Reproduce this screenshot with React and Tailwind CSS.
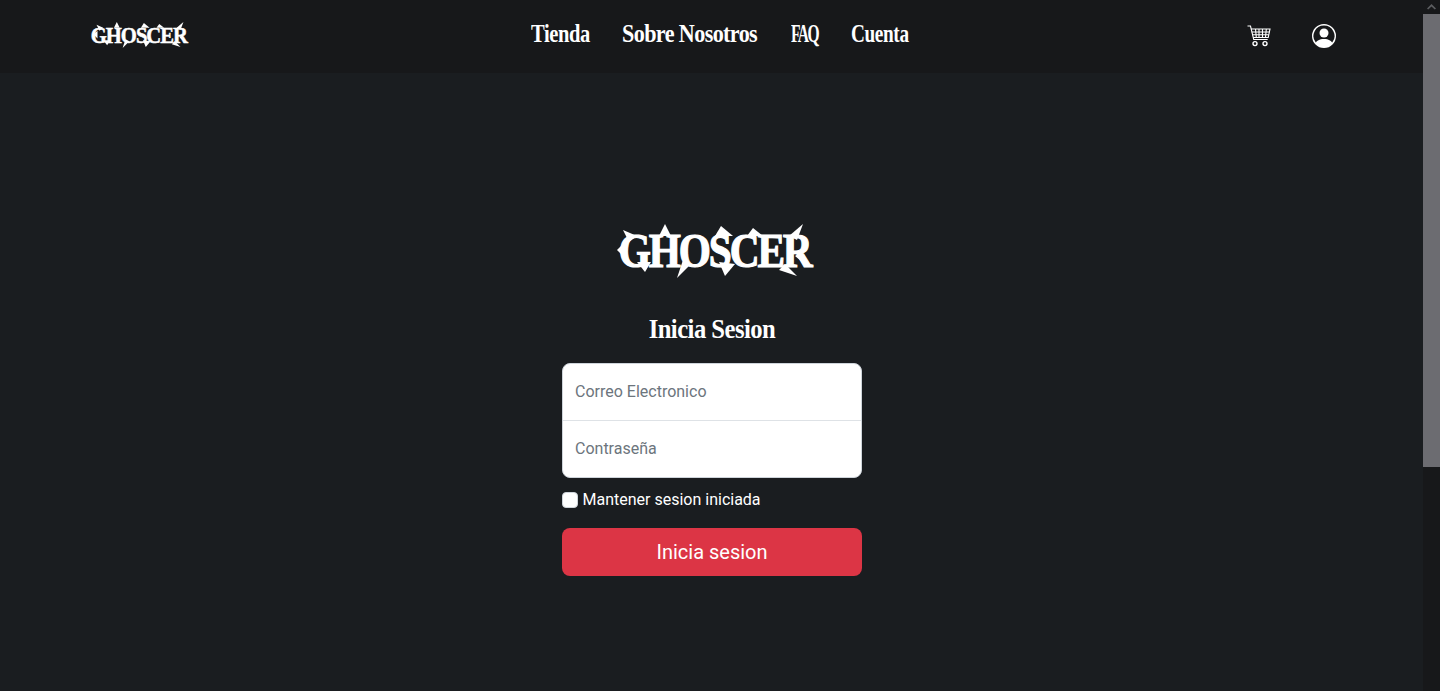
import { BsPersonCircle } from 'react-icons/bs'

const gothic = { fontFamily: '"Liberation Serif", serif' }

function Logo({ small }) {
  // spiky band logo: real text with thorns drawn around it
  const w = small ? 97 : 194
  const h = small ? 28 : 58
  return (
    <div className={small ? 'relative w-[97px] h-[28px] pr-[2px] flex items-center justify-center' : 'relative w-[194px] h-[58px] pl-[7px] flex items-center justify-center'}>
      <span
        className={small ? 'font-bold text-white text-[24px] leading-none tracking-[-1.2px] whitespace-nowrap scale-x-[0.86] [-webkit-text-stroke:0.5px_white]' : 'font-bold text-white text-[48px] leading-none tracking-[-2.4px] whitespace-nowrap scale-x-[0.86] [-webkit-text-stroke:1.2px_white]'}
        style={gothic}
      >
        GHOSCER
      </span>
      <svg className="absolute inset-0" width={w} height={h} viewBox="0 0 194 58" fill="#fff">
        <polygon points="8,8 22,14 14,20" />
        <polygon points="50,2 56,14 44,14" />
        <polygon points="62,56 68,38 76,42" />
        <polygon points="106,4 118,14 100,14" />
        <polygon points="110,54 104,40 120,42" />
        <polygon points="138,6 148,14 132,14" />
        <polygon points="188,2 182,18 174,14" />
        <polygon points="170,42 182,54 164,48" />
        <polygon points="192,44 180,34 186,30" />
        <polygon points="2,28 10,20 10,36" />
        <polygon points="30,50 22,40 36,40" />
      </svg>
    </div>
  )
}

function CartIcon() {
  return (
    <svg width="24" height="22" viewBox="0 0 24 22" fill="none" stroke="#fff" strokeWidth="1.1">
      <path d="M0.5 1h3l3.2 13.5h14" />
      <path d="M4 4h19l-1.8 8.5H6" />
      <path d="M4.8 7h17.6M5.4 9.8h16.4M8.5 4l.8 8.5M12 4v8.5M15.5 4v8.5M19.3 4l-.8 8.5" />
      <circle cx="8" cy="18.6" r="2" strokeWidth="1.4" />
      <circle cx="18" cy="18.6" r="2" strokeWidth="1.4" />
    </svg>
  )
}

function Scrollbar() {
  return (
    <div className="w-[17px] h-full shrink-0 bg-[#17181a] flex flex-col">
      <div className="h-[14px] flex items-center justify-center">
        <svg width="9" height="6" viewBox="0 0 9 6" fill="#5c5d60">
          <polygon points="4.5,0 9,4.5 7.8,5.6 4.5,2.4 1.2,5.6 0,4.5" />
        </svg>
      </div>
      <div className="h-[453px] bg-[#6c6c71]" />
    </div>
  )
}

export default function App() {
  return (
    <div className="h-screen flex overflow-hidden bg-[#1a1d20]" style={{ fontFamily: 'Roboto, sans-serif' }}>
      <div className="flex-1 min-w-0 flex flex-col">
        <header className="h-[73px] shrink-0 bg-[#17181a] flex items-center pl-[91px] pr-[87px]">
          <div className="w-[440px] -mt-[3px]">
            <Logo small />
          </div>
          <nav className="flex items-center gap-8 -mt-[5px] text-white font-bold text-[26px] leading-none whitespace-nowrap" style={gothic}>
            <a className="w-[59px] origin-left scale-x-[0.79] tracking-[-0.5px]">Tienda</a>
            <a className="w-[137px] origin-left scale-x-[0.85] tracking-[-0.7px]">Sobre Nosotros</a>
            <a className="w-[28px] origin-left scale-x-[0.6] tracking-[-2.6px]">FAQ</a>
            <a className="w-[58px] origin-left scale-x-[0.74] tracking-[-0.5px]">Cuenta</a>
          </nav>
          <div className="ml-auto flex items-center gap-[41px] -mt-[2px]">
            <CartIcon />
            <BsPersonCircle className="text-white w-6 h-6" />
          </div>
        </header>

        <main className="flex-1 flex flex-col items-center pt-[149px]">
          <Logo />
          <h1 className="mt-[33px] text-white font-bold text-[28px] leading-[32px] tracking-[-0.6px] scale-x-[0.88]" style={gothic}>
            Inicia Sesion
          </h1>
          <form className="mt-[18px] w-[300px]">
            <div className="h-[115px] bg-white rounded-lg border border-[#ced4da] overflow-hidden flex flex-col">
              <input
                type="email"
                placeholder="Correo Electronico"
                className="h-[57px] shrink-0 border-b border-[#dee2e6] pl-[12.5px] pr-3 pb-[2px] text-base text-[#212529] placeholder:text-[#6c757d] outline-none"
              />
              <input
                type="password"
                placeholder="Contraseña"
                className="flex-1 min-h-0 pl-[12.5px] pr-3 text-base text-[#212529] placeholder:text-[#6c757d] outline-none"
              />
            </div>
            <label className="mt-[10px] flex items-center gap-[5px] h-6 text-white text-base">
              <input type="checkbox" className="appearance-none w-4 h-4 bg-white rounded-[4px] border border-[#ced4da]" />
              Mantener sesion iniciada
            </label>
            <button type="button" className="mt-[16px] w-full h-12 pl-[1px] rounded-lg bg-[#dc3545] text-white text-xl">
              Inicia sesion
            </button>
          </form>
        </main>
      </div>
      <Scrollbar />
    </div>
  )
}
